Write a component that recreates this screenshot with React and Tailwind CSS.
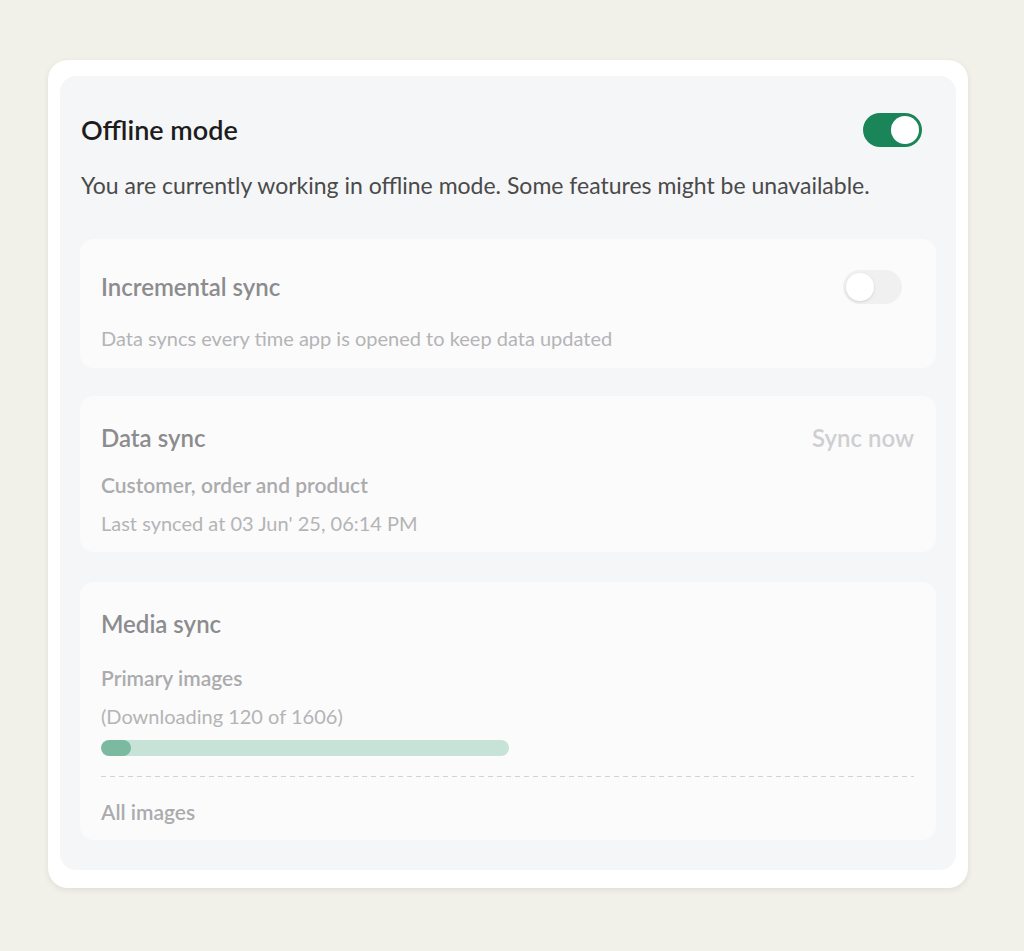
import { useState } from "react";

function Toggle({ on, onChange }) {
  return (
    <button
      onClick={onChange}
      className={`flex h-[34px] w-[59px] shrink-0 items-center rounded-full p-[3px] transition-colors ${
        on ? "bg-[#1a8558] justify-end" : "bg-[#f0f0f1] justify-start"
      }`}
      aria-label="Toggle"
    >
      <span
        className={`block h-[28px] w-[28px] rounded-full bg-white ${
          on ? "" : "shadow-[0_1px_3px_rgba(0,0,0,0.12)]"
        }`}
      />
    </button>
  );
}

function Card({ children, className = "" }) {
  return (
    <div className={`rounded-[14px] bg-[#fbfbfc] pl-[21px] pr-[22px] ${className}`}>
      {children}
    </div>
  );
}

export default function App() {
  const [offline, setOffline] = useState(true);
  const [incremental, setIncremental] = useState(false);
  const done = 120;
  const total = 1606;

  return (
    <div
      className="min-h-[951px] w-full bg-[#f1f1ea] pt-[60px] pl-[48px]"
      style={{ fontFamily: "Lato, 'Noto Sans', sans-serif" }}
    >
      <div className="w-[920px] rounded-[20px] bg-white px-[12px] pt-[16px] pb-[18px] shadow-[0_2px_6px_rgba(0,0,0,0.08)]">
        <div className="rounded-[16px] bg-[#f5f6f7] pl-[21px] pr-[20px] pt-[37px] pb-[30px]">
          <div className="flex items-center justify-between pr-[14px]">
            <h1 className="text-[27px] font-semibold leading-[34px] text-[#1c1c1c]">
              Offline mode
            </h1>
            <Toggle on={offline} onChange={() => setOffline((v) => !v)} />
          </div>
          <p className="mt-[24px] text-[23px] leading-[28px] text-[#4a4a4a]">
            You are currently working in offline mode. Some features might be
            unavailable.
          </p>

          <div className="-ml-px">
            <Card className="mt-[40px] pt-[31px] pb-[17px]">
              <div className="flex items-center justify-between pr-[12px]">
                <h2 className="text-[24px] font-semibold leading-[30px] text-[#8c8c8e]">
                  Incremental sync
                </h2>
                <Toggle
                  on={incremental}
                  onChange={() => setIncremental((v) => !v)}
                />
              </div>
              <p className="mt-[21px] text-[20px] leading-[26px] text-[#b4b4b6]">
                Data syncs every time app is opened to keep data updated
              </p>
            </Card>

            <Card className="mt-[28px] pt-[27px] pb-[16px]">
              <div className="flex items-center justify-between">
                <h2 className="text-[24px] font-semibold leading-[30px] text-[#8c8c8e]">
                  Data sync
                </h2>
                <button className="text-[24px] font-semibold leading-[30px] text-[#cfcfd2]">
                  Sync now
                </button>
              </div>
              <p className="mt-[19px] text-[21px] font-semibold leading-[26px] text-[#ababad]">
                Customer, order and product
              </p>
              <p className="mt-[12px] text-[20px] leading-[26px] text-[#b4b4b6]">
                Last synced at 03 Jun' 25, 06:14 PM
              </p>
            </Card>

            <Card className="mt-[30px] pt-[27px] pb-[15px]">
              <h2 className="text-[24px] font-semibold leading-[30px] text-[#8c8c8e]">
                Media sync
              </h2>
              <p className="mt-[26px] text-[21px] font-semibold leading-[26px] text-[#ababad]">
                Primary images
              </p>
              <p className="mt-[12px] text-[20px] leading-[26px] text-[#b4b4b6]">
                (Downloading {done} of {total})
              </p>
              <div className="mt-[11px] h-[16px] w-[408px] overflow-hidden rounded-full bg-[#c7e3d8]">
                <div
                  className="h-full rounded-full bg-[#7bb9a1]"
                  style={{ width: `${Math.max((done / total) * 100, 6.9)}%` }}
                />
              </div>
              <div className="mt-[20px] h-px bg-[linear-gradient(to_right,#d2d2d4_5px,transparent_5px)] bg-[length:9px_1px] bg-repeat-x" />
              <p className="mt-[22px] text-[21px] font-semibold leading-[26px] text-[#ababad]">
                All images
              </p>
            </Card>
          </div>
        </div>
      </div>
    </div>
  );
}
